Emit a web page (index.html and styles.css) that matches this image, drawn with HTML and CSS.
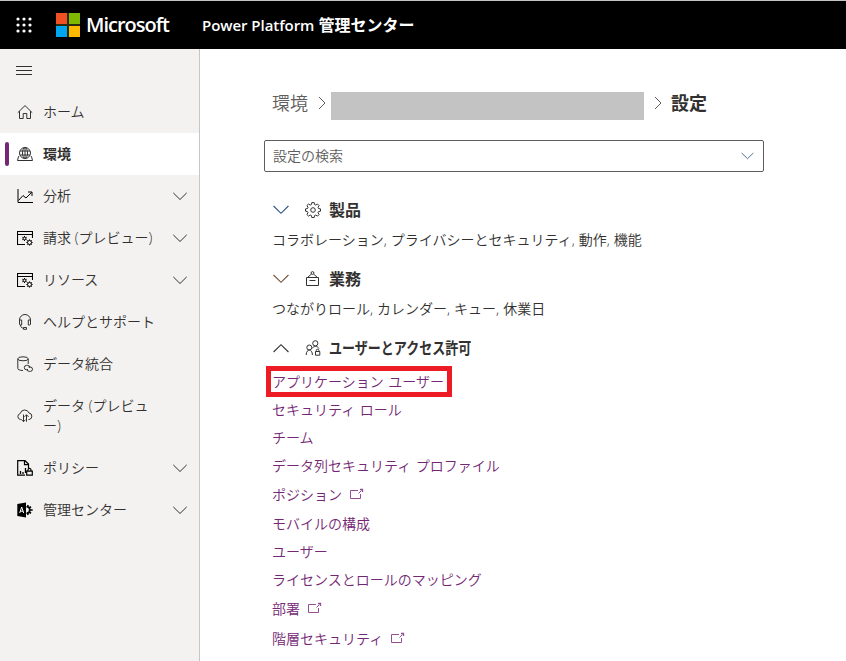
FILE: index.html
```html
<!DOCTYPE html>
<html lang="ja">
<head>
<meta charset="utf-8">
<title>Power Platform 管理センター</title>
<link rel="stylesheet" href="styles.css">
</head>
<body>
<svg class="defs" width="0" height="0" aria-hidden="true">
  <symbol id="chev" viewBox="0 0 16 9"><path d="M1.300 .9 8 7.500l6.700-6.600"/></symbol>
  <symbol id="right" viewBox="0 0 8 14"><path d="M1 1l6 6-6 6"/></symbol>
  <symbol id="window" viewBox="0 0 16 16"><path d="M8 14.500H.5v-13h15V8M.5 4.500h15" stroke-width="1.100"/><circle cx="7.500" cy="8.500" r="1.400"/><path d="M7.500 6v1.200M7.500 9.800V11M5.300 7.200l1 .6M8.700 9.200l1 .6M9.700 7.200l-1 .6M6.300 9.200l-1 .6"/><circle cx="12.500" cy="12.500" r="2"/><path d="M12.500 9.400v1.100M12.500 14.500v1.100M9.400 12.500h1.100M14.500 12.500h1.100M10.300 10.300l.8.800M13.900 13.900l.8.800M14.700 10.300l-.8.800M11.100 13.900l-.8.800"/></symbol>
  <symbol id="ext" viewBox="0 0 15 12"><path d="M9 2.500H1.500v8h10V6M9.500 5.500l3-3"/><path d="M11 1.500h2.500V4" stroke-width="1.300"/></symbol>
</svg>

<header class="topbar">
  <svg class="waffle" viewBox="0 0 16 16"><circle cx="2" cy="2" r="1.600"/><circle cx="8" cy="2" r="1.600"/><circle cx="14" cy="2" r="1.600"/><circle cx="2" cy="8" r="1.600"/><circle cx="8" cy="8" r="1.600"/><circle cx="14" cy="8" r="1.600"/><circle cx="2" cy="14" r="1.600"/><circle cx="8" cy="14" r="1.600"/><circle cx="14" cy="14" r="1.600"/></svg>
  <div class="logo"><i class="red"></i><i class="green"></i><i class="blue"></i><i class="yellow"></i></div>
  <span class="brand">Microsoft</span>
  <span class="product"><span class="latin">Power Platform</span> 管理センター</span>
</header>

<div class="shell">
  <nav class="sidebar">
    <div class="menu"><svg class="icon" viewBox="0 0 16 10"><path d="M0 .5h16M0 4.500h16M0 8.500h16"/></svg></div>
    <a class="item"><svg class="icon" viewBox="0 0 16 16"><path d="M.8 8.700 8 1.600l7.200 7.100M2.500 7.200v7.300h3.700V9.500h3.600v5h3.700V7.200"/></svg><span>ホーム</span></a>
    <a class="item active"><svg class="icon" viewBox="0 0 16 16"><circle cx="8" cy="7" r="5.500"/><ellipse cx="8" cy="7" rx="2.500" ry="5.500"/><path d="M3 5h10M3 9h10M8 1.500v11M2.200 10.500H1.500L.5 14.500h15l-1-4h-.7"/></svg><span>環境</span></a>
    <a class="item dark"><svg class="icon" viewBox="0 0 16 16"><path d="M1 1v13.500h15M1.500 12.500 6 7.500l3 2.500 5.500-5.500"/><path d="M11 4h4v4"/></svg><span>分析</span><svg class="chev"><use href="#chev"/></svg></a>
    <a class="item dark"><svg class="icon"><use href="#window"/></svg><span>請求 (プレビュー)</span><svg class="chev"><use href="#chev"/></svg></a>
    <a class="item dark"><svg class="icon"><use href="#window"/></svg><span>リソース</span><svg class="chev"><use href="#chev"/></svg></a>
    <a class="item"><svg class="icon" viewBox="0 0 16 16"><path d="M2.500 6.500V6a5.500 5.500 0 0 1 11 0v.5M2.500 6h2.200v5H3.500a1 1 0 0 1-1-1zM13.500 6h-2.200v5h1.200a1 1 0 0 0 1-1zM3.500 11c0 2 1 3 3 3.200M6.500 13.500h3v1.800h-3z"/></svg><span>ヘルプとサポート</span></a>
    <a class="item"><svg class="icon" viewBox="0 0 16 16"><ellipse cx="6" cy="2.800" rx="5.200" ry="2"/><path d="M.8 2.800v9.700c0 1 1.800 1.900 5.200 2M11.200 2.800V8M11 13.800H9.500a2.200 2.200 0 0 1 0-4.400h1.200a2.200 2.200 0 0 1 2.100 2.600M11.500 11h1.800a2.200 2.200 0 0 1 0 4.400h-1a2.200 2.200 0 0 1-2.200-2.400"/></svg><span>データ統合</span></a>
    <a class="item tall"><svg class="icon" viewBox="0 0 16 16"><path d="M4.500 11.500h-1A3 3 0 0 1 3.200 5.600 4.600 4.600 0 0 1 12 5a3.300 3.300 0 0 1 .2 6.500h-.7M6.500 6.500v7.200M4.500 11.700l2 2 2-2M9.500 13.700V6.800M7.500 8.800l2-2 2 2"/></svg><span>データ (プレビュー)</span></a>
    <a class="item dark"><svg class="icon" viewBox="0 0 16 16"><path d="M8 15.200H.7V.7H8L11.500 4v4M7.500.7v4h4" stroke-width="1.200"/><path d="M3.500 14v-3M6 14v-2M8.500 13V8" stroke-width="1.300"/><path d="M9.700 11.200h5.600v4H9.700zM11 11V9.900a1.500 1.500 0 0 1 3 0V11" stroke-width="1.200"/></svg><span>ポリシー</span><svg class="chev"><use href="#chev"/></svg></a>
    <a class="item dark"><svg class="icon" viewBox="0 0 16 16"><path class="solid" d="M.3 2 9 .6v14.800L.3 14z"/><path class="letter-mark" d="M2.700 11 4.700 5l2 6M3.400 9.200H6"/><path d="M9.500 4.800a3.200 3.200 0 0 1 0 6.400" stroke-width="1.600"/><path d="M10.500 4.800l.7-1.600M13 8h2.700M10.500 11.200l.7 1.600M12 6l2-1.300M12 10l2 1.300" stroke-width="1.700"/></svg><span>管理センター</span><svg class="chev"><use href="#chev"/></svg></a>
  </nav>

  <main class="content">
    <div class="crumbs"><span>環境</span><svg class="sep"><use href="#right"/></svg><div class="mask"></div><svg class="sep"><use href="#right"/></svg><strong>設定</strong></div>
    <div class="search"><span>設定の検索</span><svg class="chev" viewBox="0 0 13 8"><path d="M.7 1l5.800 5.700L12.300 1"/></svg></div>

    <section class="group">
      <h2><svg class="chev blue-chev"><use href="#chev"/></svg><svg class="icon" viewBox="0 0 16 16"><circle cx="8" cy="8" r="2.300"/><path d="M6.800.6h2.400l.4 2 1.200.5 1.700-1.100 1.600 1.600-1.100 1.700.5 1.200 2 .4v2.300l-2 .4-.5 1.200 1.100 1.700-1.600 1.600-1.700-1.100-1.200.5-.4 2H6.800l-.4-2-1.200-.5-1.700 1.100-1.600-1.600L3 10.800l-.5-1.200-2-.4V6.900l2-.4L3 5.300 1.900 3.600 3.500 2l1.700 1.100 1.200-.5z"/></svg><span>製品</span></h2>
      <p>コラボレーション, プライバシーとセキュリティ, 動作, 機能</p>
    </section>
    <section class="group">
      <h2><svg class="chev brown-chev"><use href="#chev"/></svg><svg class="icon" viewBox="0 0 16 16"><path d="M1.500 6.500h12v8h-12zM2.500 6.500 6.500 3M12.500 6.500 8.500 3M4.500 9.500h6"/><circle cx="7.500" cy="2" r="1.400"/></svg><span>業務</span></h2>
      <p>つながりロール, カレンダー, キュー, 休業日</p>
    </section>
    <section class="group open">
      <h2><svg class="chev up"><use href="#chev"/></svg><svg class="icon" viewBox="0 0 16 16"><circle cx="10.300" cy="3.300" r="2.600"/><circle cx="4.300" cy="7.500" r="2.500"/><path d="M1.200 15c0-6.600 6.200-6.600 6.200 0M7 8.500c1.500-2.700 5.500-2.700 7 0M10.500 11.500h4.300v3.700h-4.300zM11.300 11.500v-1a1.300 1.300 0 0 1 2.600 0v1"/></svg><span class="narrow">ユーザーとアクセス許可</span></h2>
      <ul class="links">
        <li class="marked"><a>アプリケーション ユーザー</a></li>
        <li><a>セキュリティ ロール</a></li>
        <li><a>チーム</a></li>
        <li><a>データ列セキュリティ プロファイル</a></li>
        <li class="external"><a>ポジション</a><svg class="ext"><use href="#ext"/></svg></li>
        <li><a>モバイルの構成</a></li>
        <li><a>ユーザー</a></li>
        <li><a>ライセンスとロールのマッピング</a></li>
        <li class="external"><a>部署</a><svg class="ext"><use href="#ext"/></svg></li>
        <li class="external"><a>階層セキュリティ</a><svg class="ext"><use href="#ext"/></svg></li>
      </ul>
    </section>
  </main>
</div>
</body>
</html>
```
FILE: styles.css
```css
*, *::before { box-sizing: border-box; }
body {
  margin: 0;
  height: 661px;
  overflow: hidden;
  display: flex;
  flex-direction: column;
  background: #fff;
  color: #323130;
  font: 350 14px/20px "Open Sans", "Noto Sans CJK JP", sans-serif;
}
svg { flex: none; fill: none; stroke: currentColor; stroke-width: 1; }
.defs { position: absolute; }
.icon { width: 16px; height: 16px; }
.chev { width: 16px; height: 9px; }

.topbar {
  height: 49px;
  flex: none;
  border-top: 1px solid #c4c4c4;
  background: #000;
  color: #fff;
  display: flex;
  align-items: center;
  padding-left: 16px;
  white-space: nowrap;
}
.waffle { width: 16px; height: 16px; fill: #fff; stroke: none; }
.logo {
  display: grid;
  grid-template-columns: 11px 11px;
  grid-auto-rows: 11px;
  gap: 2px;
  margin-left: 24px;
  background: #2b2b10;
}
.red { background: #f25022; }
.green { background: #7fba00; }
.blue { background: #00a4ef; }
.yellow { background: #ffb900; }
.brand { width: 83px; margin-left: 6px; font-size: 20px; font-weight: 600; letter-spacing: -1px; }
.product { margin-left: 33px; font-size: 16px; font-weight: 600; }
.latin { font-size: 15px; letter-spacing: -0.05px; }

.shell { flex: 1; min-height: 0; display: flex; }
.sidebar {
  width: 200px;
  flex: none;
  background: #f3f2f1;
  border-right: 1px solid #c8c6c4;
}
.menu { height: 42px; padding: 17px 0 0 16px; }
.menu .icon { height: 10px; display: block; }
.item {
  height: 42px;
  display: flex;
  align-items: center;
  padding: 0 11px 0 17px;
}
.item > span { width: 115px; margin-left: 10px; flex: none; white-space: nowrap; }
.item .chev { margin-left: auto; }
.dark .icon { color: #000; }
.icon .solid { fill: #000; stroke: none; }
.letter-mark { stroke: #fff; }
.active { background: #fff; font-weight: 600; padding-left: 5px; }
.active::before { content: ""; width: 4px; height: 24px; margin-right: 8px; border-radius: 2px; background: #742774; }
.tall { height: 62px; }
.tall > span { white-space: normal; line-height: 20px; width: 110px; word-break: break-all; }

.content { flex: 1; padding: 43px 0 0 64px; }
.crumbs { height: 28px; display: flex; align-items: flex-start; padding-left: 8px; font-size: 18px; line-height: 23px; color: #605e5c; }
.sep { width: 8px; height: 14px; margin: 4px 5px 0 10px; }
.mask { width: 313px; height: 28px; background: #c3c3c3; }
.crumbs strong { margin-left: 4px; color: #323130; }
.search {
  width: 500px;
  height: 32px;
  margin-top: 20px;
  padding: 0 9px 0 8px;
  display: flex;
  align-items: center;
  justify-content: space-between;
  border: 1px solid #605e5c;
  border-radius: 2px;
  color: #605e5c;
}
.search .chev { width: 13px; height: 8px; color: #4c7199; }
.group { height: 69px; padding-left: 8px; }
.search + .group { margin-top: 27px; }
.group h2 { height: 22px; margin: 0; display: flex; align-items: center; font-size: 16px; line-height: 22px; }
.group h2 .icon { margin: 0 8px 0 16px; }
.group h2 .chev { width: 18px; height: 10px; margin-right: -1px; }
.blue-chev { color: #2f5587; }
.brown-chev { color: #73543a; }
.up { transform: rotate(180deg); }
.narrow { display: inline-block; white-space: nowrap; transform: scaleX(.813); transform-origin: 0 50%; }
.group p { margin: 9px 0 0; white-space: nowrap; word-spacing: 0.4px; }
.links { list-style: none; margin: 9px 0 0; padding: 0; color: #742774; word-spacing: 1px; }
.links li { height: 28px; display: flex; align-items: center; white-space: nowrap; position: relative; }
.links .external { height: 30px; }
.marked::before {
  content: "";
  position: absolute;
  left: -6px;
  top: -2px;
  width: 186px;
  height: 31px;
  border: 5px solid #ed1c24;
}
.ext { width: 15px; height: 12px; margin: 0 0 2px 7px; color: #935093; }
```
